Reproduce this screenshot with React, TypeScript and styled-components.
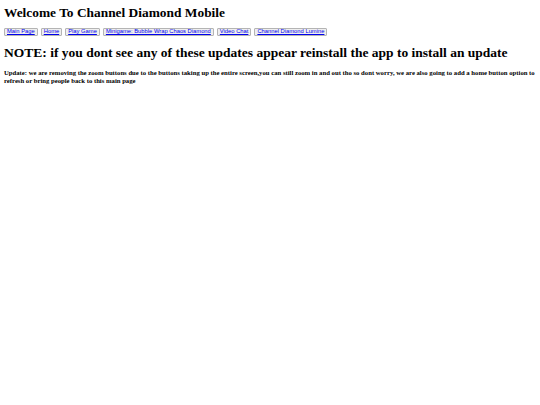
import {FC} from 'react';
import styled, {createGlobalStyle} from 'styled-components';

const GlobalStyle = createGlobalStyle`
  html, body {
    margin: 0;
    padding: 0;
    background: #ffffff;
  }
  body {
    padding: 5px 4px;
    font-family: "Liberation Serif", "Times New Roman", serif;
    color: #000000;
  }
`;

const Title = styled.h1`
  margin: 0 0 7.6px 0;
  font-size: 13.4px;
  line-height: 15.4px;
  font-weight: bold;
`;

const NavBar = styled.nav`
  display: flex;
  flex-wrap: wrap;
  gap: 3px;
  margin-bottom: 9px;
`;

const NavButton = styled.button`
  display: inline-flex;
  align-items: center;
  box-sizing: border-box;
  height: 8px;
  padding: 0 2px;
  margin: 0;
  background: #efefef;
  border: 1px solid #b4b4b4;
  border-radius: 1px;
  font-family: "Liberation Sans", Arial, sans-serif;
  font-size: 5.8px;
  line-height: 1;
  cursor: pointer;
`;

const NavLink = styled.a`
  color: #0000ee;
  text-decoration: underline;
`;

const Notice = styled.h2`
  margin: 0 0 9px 0;
  font-size: 13.5px;
  line-height: 15.4px;
  font-weight: bold;
`;

const UpdateText = styled.h5`
  margin: 0;
  font-size: 6.7px;
  line-height: 8px;
  font-weight: bold;
`;

const links = [
  'Main Page',
  'Home',
  'Play Game',
  'Minigame: Bubble Wrap Chaos Diamond',
  'Video Chat',
  'Channel Diamond Lumine',
];

const App: FC = () => (
  <>
    <GlobalStyle />
    <Title>Welcome To Channel Diamond Mobile</Title>
    <NavBar>
      {links.map((label) => (
        <NavButton key={label}>
          <NavLink href='#'>{label}</NavLink>
        </NavButton>
      ))}
    </NavBar>
    <Notice>
      NOTE: if you dont see any of these updates appear reinstall the app to
      install an update
    </Notice>
    <UpdateText>
      Update: we are removing the zoom buttons due to the buttons taking up
      the entire screen,you can still zoom in and out tho so dont worry, we
      are also going to add a home button option to refresh or bring people
      back to this main page
    </UpdateText>
  </>
);

export default App;
